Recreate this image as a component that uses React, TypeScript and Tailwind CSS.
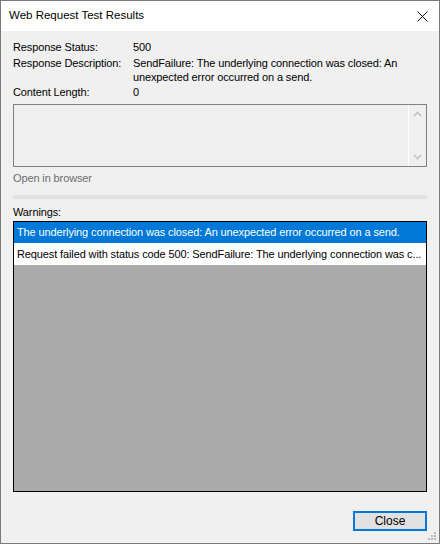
import React from 'react';

const font = { fontFamily: '"Liberation Sans", Arial, sans-serif' };

const Field: React.FC<{ label: string; children: React.ReactNode; className?: string }> = ({ label, children, className }) => (
  <div className={`flex leading-[14px] ${className ?? ''}`}>
    <div className="w-[120px] shrink-0">{label}</div>
    <div className="flex-1">{children}</div>
  </div>
);

const App: React.FC = () => {
  return (
    <div className="w-[440px] h-[545px] bg-white" style={font}>
      <div className="relative w-[440px] h-[544px] border border-[#7a7a7a] flex flex-col text-[11px] tracking-[-0.12px] text-black">
        {/* Title bar */}
        <div className="h-[30px] bg-white flex items-center justify-between pl-[8px] pr-[10px] shrink-0">
          <span className="text-[11.5px] tracking-normal">Web Request Test Results</span>
          <svg width="11" height="11" viewBox="0 0 11 11" className="mr-[1px]">
            <path d="M0.5 0.5 L10.5 10.5 M10.5 0.5 L0.5 10.5" stroke="#111" strokeWidth="1" />
          </svg>
        </div>

        {/* Body */}
        <div className="flex-1 bg-[#f0f0f0] flex flex-col px-[12px] pt-[9px]">
          <Field label="Response Status:">500</Field>
          <Field label="Response Description:" className="mt-[2px]">
            SendFailure: The underlying connection was closed: An unexpected error occurred on a send.
          </Field>
          <Field label="Content Length:" className="mt-[1px]">0</Field>

          {/* Content box */}
          <div className="mt-[5px] h-[63px] border border-[#828282] flex">
            <div className="flex-1" />
            <div className="w-[18px] border-l border-white flex flex-col items-center justify-between py-[6px]">
              <svg width="9" height="6" viewBox="0 0 9 6">
                <path d="M1 5 L4.5 1.5 L8 5" stroke="#c2c2c2" strokeWidth="1.6" fill="none" />
              </svg>
              <svg width="9" height="6" viewBox="0 0 9 6">
                <path d="M1 1 L4.5 4.5 L8 1" stroke="#c2c2c2" strokeWidth="1.6" fill="none" />
              </svg>
            </div>
          </div>

          <div className="mt-[4px] leading-[15px] text-[#6d6d6d]">Open in browser</div>

          <div className="mt-[9px] h-[4px] bg-[#e1e1e1]" />

          <div className="mt-[6px] leading-[15px]">Warnings:</div>

          {/* Warnings list */}
          <div className="mt-[1px] h-[271px] border border-black bg-[#ababab] flex flex-col">
            <div className="h-[21px] bg-[#0078d7] text-white flex items-center pl-[3px] whitespace-nowrap overflow-hidden">
              The underlying connection was closed: An unexpected error occurred on a send.
            </div>
            <div className="h-[22px] bg-white flex items-center pl-[3px] whitespace-nowrap overflow-hidden">
              Request failed with status code 500: SendFailure: The underlying connection was c...
            </div>
          </div>

          {/* Footer */}
          <div className="flex justify-end mt-[19px]">
            <button className="w-[74px] h-[20px] border-2 border-[#0078d7] bg-[#e1e1e1] text-[12px] tracking-normal flex items-center justify-center leading-none">
              Close
            </button>
          </div>
        </div>

        {/* Resize grip */}
        <svg width="9" height="9" viewBox="0 0 9 9" className="absolute right-[2px] bottom-[2px]">
          <rect x="6" y="0" width="2" height="2" fill="#b8b8b8" />
          <rect x="3" y="3" width="2" height="2" fill="#b8b8b8" />
          <rect x="6" y="3" width="2" height="2" fill="#b8b8b8" />
          <rect x="0" y="6" width="2" height="2" fill="#b8b8b8" />
          <rect x="3" y="6" width="2" height="2" fill="#b8b8b8" />
          <rect x="6" y="6" width="2" height="2" fill="#b8b8b8" />
        </svg>
      </div>
    </div>
  );
};

export default App;
